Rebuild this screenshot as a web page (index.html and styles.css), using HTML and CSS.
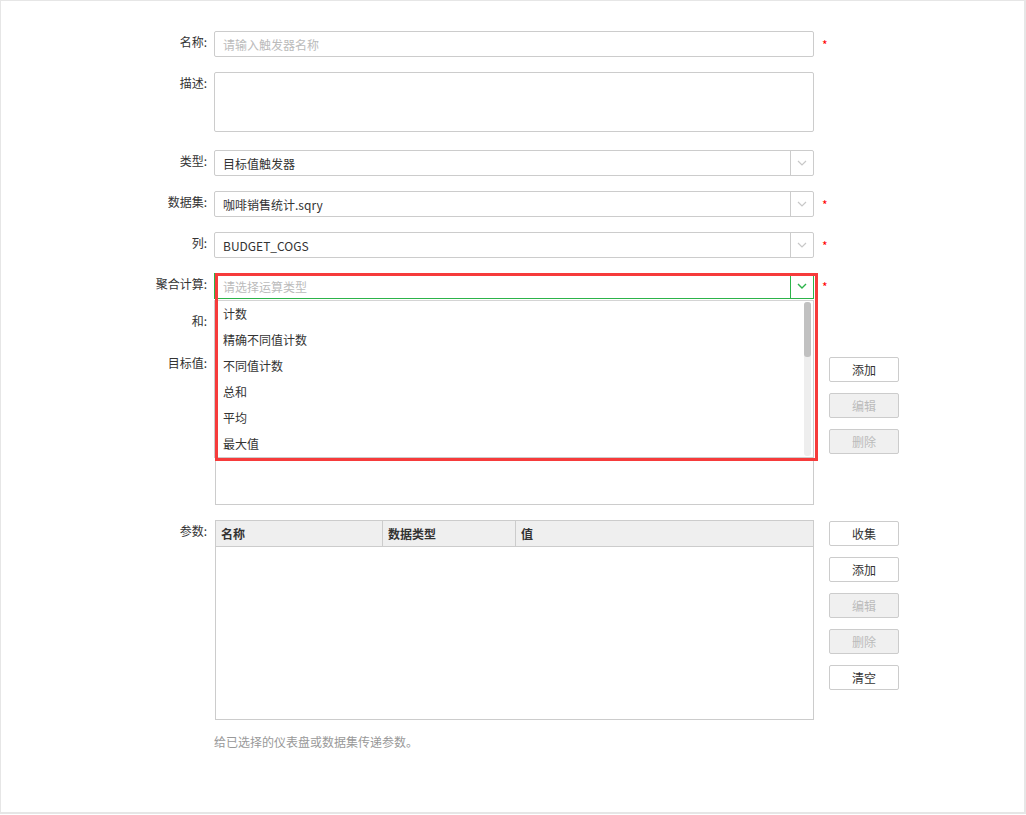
FILE: index.html
```html
<!DOCTYPE html>
<html lang="zh">
<head>
<meta charset="utf-8">
<title>触发器</title>
<link rel="stylesheet" href="styles.css">
</head>
<body>
<div class="frame">
  <div class="form">
    <div class="row r-name">
      <label class="lbl">名称:</label>
      <div class="input placeholder">请输入触发器名称</div>
      <span class="req">*</span>
    </div>
    <div class="row r-desc">
      <label class="lbl">描述:</label>
      <div class="textarea"></div>
    </div>
    <div class="row">
      <label class="lbl">类型:</label>
      <div class="select"><span class="val">目标值触发器</span><span class="arrow"><svg width="10" height="6" viewBox="0 0 10 6"><polyline points="1,1 5,5 9,1" fill="none" stroke="#c8c8c8" stroke-width="1.2"/></svg></span></div>
    </div>
    <div class="row">
      <label class="lbl">数据集:</label>
      <div class="select"><span class="val">咖啡销售统计.sqry</span><span class="arrow"><svg width="10" height="6" viewBox="0 0 10 6"><polyline points="1,1 5,5 9,1" fill="none" stroke="#c8c8c8" stroke-width="1.2"/></svg></span></div>
      <span class="req">*</span>
    </div>
    <div class="row">
      <label class="lbl">列:</label>
      <div class="select"><span class="val">BUDGET_COGS</span><span class="arrow"><svg width="10" height="6" viewBox="0 0 10 6"><polyline points="1,1 5,5 9,1" fill="none" stroke="#c8c8c8" stroke-width="1.2"/></svg></span></div>
      <span class="req">*</span>
    </div>
    <div class="row r-agg">
      <label class="lbl">聚合计算:</label>
      <div class="select-wrap">
        <div class="select focus"><span class="val placeholder">请选择运算类型</span><span class="arrow"><svg width="10" height="6" viewBox="0 0 10 6"><polyline points="1,1 5,5 9,1" fill="none" stroke="#2cb34a" stroke-width="1.4"/></svg></span></div>
        <div class="dropdown">
          <ul class="opts">
            <li>计数</li>
            <li>精确不同值计数</li>
            <li>不同值计数</li>
            <li>总和</li>
            <li>平均</li>
            <li>最大值</li>
          </ul>
          <div class="scroll"><div class="thumb"></div></div>
        </div>
        <div class="highlight"></div>
      </div>
      <span class="req">*</span>
    </div>
    <div class="row r-and">
      <label class="lbl">和:</label>
      <div class="select"><span class="val"></span><span class="arrow"></span></div>
    </div>
    <div class="row r-target">
      <label class="lbl">目标值:</label>
      <div class="listbox"></div>
      <div class="btns">
        <button class="btn">添加</button>
        <button class="btn disabled">编辑</button>
        <button class="btn disabled">删除</button>
      </div>
    </div>
    <div class="row r-params">
      <label class="lbl">参数:</label>
      <div class="table">
        <div class="thead">
          <div class="th c1">名称</div>
          <div class="th c2">数据类型</div>
          <div class="th c3">值</div>
        </div>
      </div>
      <div class="btns">
        <button class="btn">收集</button>
        <button class="btn">添加</button>
        <button class="btn disabled">编辑</button>
        <button class="btn disabled">删除</button>
        <button class="btn">清空</button>
      </div>
    </div>
    <div class="row r-hint">
      <span></span>
      <p class="hint">给已选择的仪表盘或数据集传递参数。</p>
    </div>
  </div>
</div>
</body>
</html>
```
FILE: styles.css
```css
* { box-sizing: border-box; }
html, body { margin: 0; padding: 0; background: #fff; }
body {
  font-family: "Noto Sans CJK SC", "Liberation Sans", sans-serif;
  font-size: 12px;
  color: #333;
}
.frame {
  width: 1026px;
  height: 814px;
  border: 1px solid #e6e6e6;
  border-right-width: 2px;
  border-bottom-width: 2px;
}
.form { padding-top: 30px; }
.row {
  display: grid;
  grid-template-columns: 206px 600px auto;
  column-gap: 7px;
  margin-bottom: 15px;
  align-items: start;
}
.lbl {
  text-align: right;
  line-height: 22px;
  white-space: nowrap;
}
.req {
  color: #f00;
  font-size: 12px;
  line-height: 14px;
  height: 22px;
  margin-left: 1px;
  padding-top: 7px;
}
.input, .select {
  height: 26px;
  border: 1px solid #ccc;
  border-radius: 2px;
  background: #fff;
  display: flex;
  align-items: center;
}
.input { padding-left: 8px; }
.placeholder { color: #bbb; }
.textarea {
  height: 60px;
  border: 1px solid #ccc;
  border-radius: 2px;
}
.r-desc { margin-bottom: 18px; }
.select .val { flex: 1; padding-left: 8px; white-space: nowrap; }
.select .arrow {
  width: 23px;
  height: 100%;
  border-left: 1px solid #ccc;
  display: flex;
  align-items: center;
  justify-content: center;
}
.select.focus { border-color: #2cb34a; border-radius: 0; }
.select.focus .arrow { border-left-color: #2cb34a; }
.select-wrap { position: relative; }
.dropdown {
  position: absolute;
  left: 0;
  top: 27px;
  width: 600px;
  height: 158px;
  background: #fff;
  border: 1px solid #ccc;
  border-top-color: #d4d4d4;
  z-index: 5;
  display: flex;
}
.opts {
  list-style: none;
  margin: 0;
  padding: 0;
  flex: 1;
}
.opts li {
  height: 26px;
  line-height: 26px;
  padding-left: 8px;
}
.scroll {
  width: 7px;
  margin: 1px 2px 1px 0;
  background: #eee;
  border-radius: 3px;
}
.thumb {
  height: 55px;
  background: #c1c1c1;
  border-radius: 3px;
}
.highlight {
  position: absolute;
  left: 1px;
  top: 0;
  width: 603px;
  height: 188px;
  border: 3px solid #f63b3b;
  z-index: 6;
  pointer-events: none;
}
.r-agg { margin-bottom: 11px; }
.r-and { margin-bottom: 16px; }
.listbox {
  height: 153px;
  border: 1px solid #ccc;
  margin-left: 1px;
}
.btns {
  display: flex;
  flex-direction: column;
  gap: 11px;
  margin-left: 8px;
}
.r-target .btns { padding-top: 5px; }
.r-params .btns { padding-top: 1px; }
.btn {
  width: 70px;
  height: 25px;
  border: 1px solid #ccc;
  border-radius: 2px;
  background: #fff;
  color: #333;
  font-family: inherit;
  font-size: 12px;
  padding: 0;
}
.btn.disabled { background: #f0f0f0; color: #bbb; }
.table {
  height: 200px;
  border: 1px solid #ccc;
  margin-left: 1px;
}
.thead {
  display: flex;
  height: 26px;
  background: #efefef;
  border-bottom: 1px solid #ccc;
}
.th {
  font-weight: bold;
  line-height: 25px;
  padding-left: 5px;
}
.c1 { width: 167px; border-right: 1px solid #ccc; }
.c2 { width: 133px; border-right: 1px solid #ccc; }
.c3 { flex: 1; }
.r-params { margin-bottom: 14px; }
.hint {
  margin: 0;
  color: #999;
  line-height: 16px;
}
```
